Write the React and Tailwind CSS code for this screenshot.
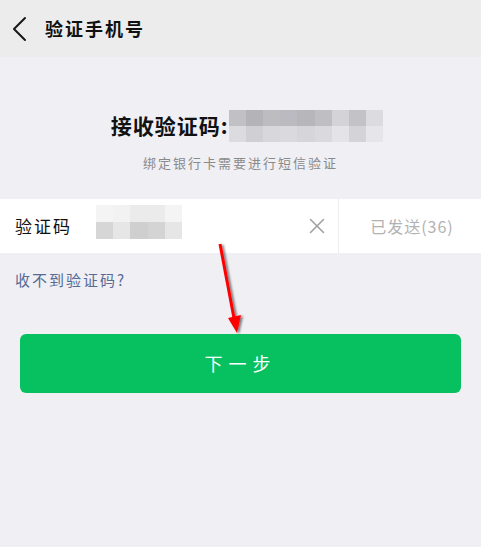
import { X } from "lucide-react";

const titleCells = [
  ["#c1c1c5", "#b4b4b8", "#bdbdc1", "#babac0", "#b6b6bb", "#bfbfc3", "#d4d4d8", "#c3c3c7", "#dcdce0"],
  ["#dcdce0", "#d0d0d4", "#d8d8dc", "#dadade", "#d6d6da", "#dadade", "#e4e4e8", "#d4d4d8", "#e6e6ea"],
];

const codeCells = [
  ["#f4f4f4", "#f2f2f2", "#ebebeb", "#ebebeb", "#f4f4f4"],
  ["#d6d6d6", "#e6e6e6", "#cfcfcf", "#d4d4d4", "#e6e6e6"],
];

const font = { fontFamily: '"Noto Sans CJK SC", "Liberation Sans", sans-serif' };

function Mosaic({ rows, cell, rowH }) {
  return (
    <div className="flex flex-col">
      {rows.map((row, i) => (
        <div key={i} className="flex">
          {row.map((c, j) => (
            <div key={j} style={{ background: c, width: cell, height: rowH }} />
          ))}
        </div>
      ))}
    </div>
  );
}

export default function App() {
  return (
    <div
      className="relative w-[481px] h-[547px] bg-[#efeff4] overflow-hidden"
      style={font}
    >
      {/* HEADER */}
      <div className="h-[57px] bg-[#ececec] flex items-center">
        <svg className="ml-[10px]" width="20" height="26" viewBox="0 0 20 26">
          <polyline
            points="15,2 4,13 15,24"
            fill="none"
            stroke="#181818"
            strokeWidth="2"
            strokeLinecap="round"
            strokeLinejoin="round"
          />
        </svg>
        <span className="ml-[15px] text-[18px] font-bold text-[#111] tracking-[2px]">
          验证手机号
        </span>
      </div>

      {/* TITLE */}
      <div className="mt-[53px] flex items-center justify-center pl-[13px]">
        <span className="text-[21px] font-bold text-[#111] tracking-[1px]">接收验证码:</span>
        <Mosaic rows={titleCells} cell={17.2} rowH={16} />
      </div>
      <p className="mt-[11px] text-center text-[13px] text-[#8a8a8a] tracking-[2px]">
        绑定银行卡需要进行短信验证
      </p>

      {/* CODE ROW */}
      <div className="mt-[26px] h-[54px] bg-white flex items-center">
        <span className="ml-[15px] w-[81px] text-[17px] text-[#111] tracking-[2px]">验证码</span>
        <div className="self-start mt-[6px]">
          <Mosaic rows={codeCells} cell={17.2} rowH={17} />
        </div>
        <div className="flex-1" />
        <X className="w-[26px] h-[26px] text-[#a0a0a0] mr-[8px]" strokeWidth={1.4} />
        <div className="h-full w-px bg-[#ededed]" />
        <span className="w-[142px] pl-[4px] text-center text-[16px] text-[#b2b2b2] tracking-[1px]">
          已发送(36)
        </span>
      </div>

      <p className="mt-[16px] ml-[15px] text-[15px] text-[#576b95] tracking-[2px]">
        收不到验证码?
      </p>

      {/* BUTTON */}
      <div className="mt-[43px] mx-[20px]">
        <button className="w-full h-[59px] rounded-[6px] bg-[#07c160] text-white text-[18px] tracking-[6px]">
          下一步
        </button>
      </div>

      {/* ANNOTATION ARROW */}
      <svg
        className="absolute left-0 top-0 pointer-events-none"
        width="481"
        height="547"
      >
        <defs>
          <filter id="sh" x="-50%" y="-50%" width="200%" height="200%">
            <feDropShadow dx="2" dy="1" stdDeviation="1" floodColor="#000" floodOpacity="0.5" />
          </filter>
        </defs>
        <g filter="url(#sh)">
          <line x1="220" y1="244" x2="234" y2="318" stroke="#ff0000" strokeWidth="3" />
          <polygon points="228,318 241,315 237,333" fill="#ff0000" />
        </g>
      </svg>
    </div>
  );
}
